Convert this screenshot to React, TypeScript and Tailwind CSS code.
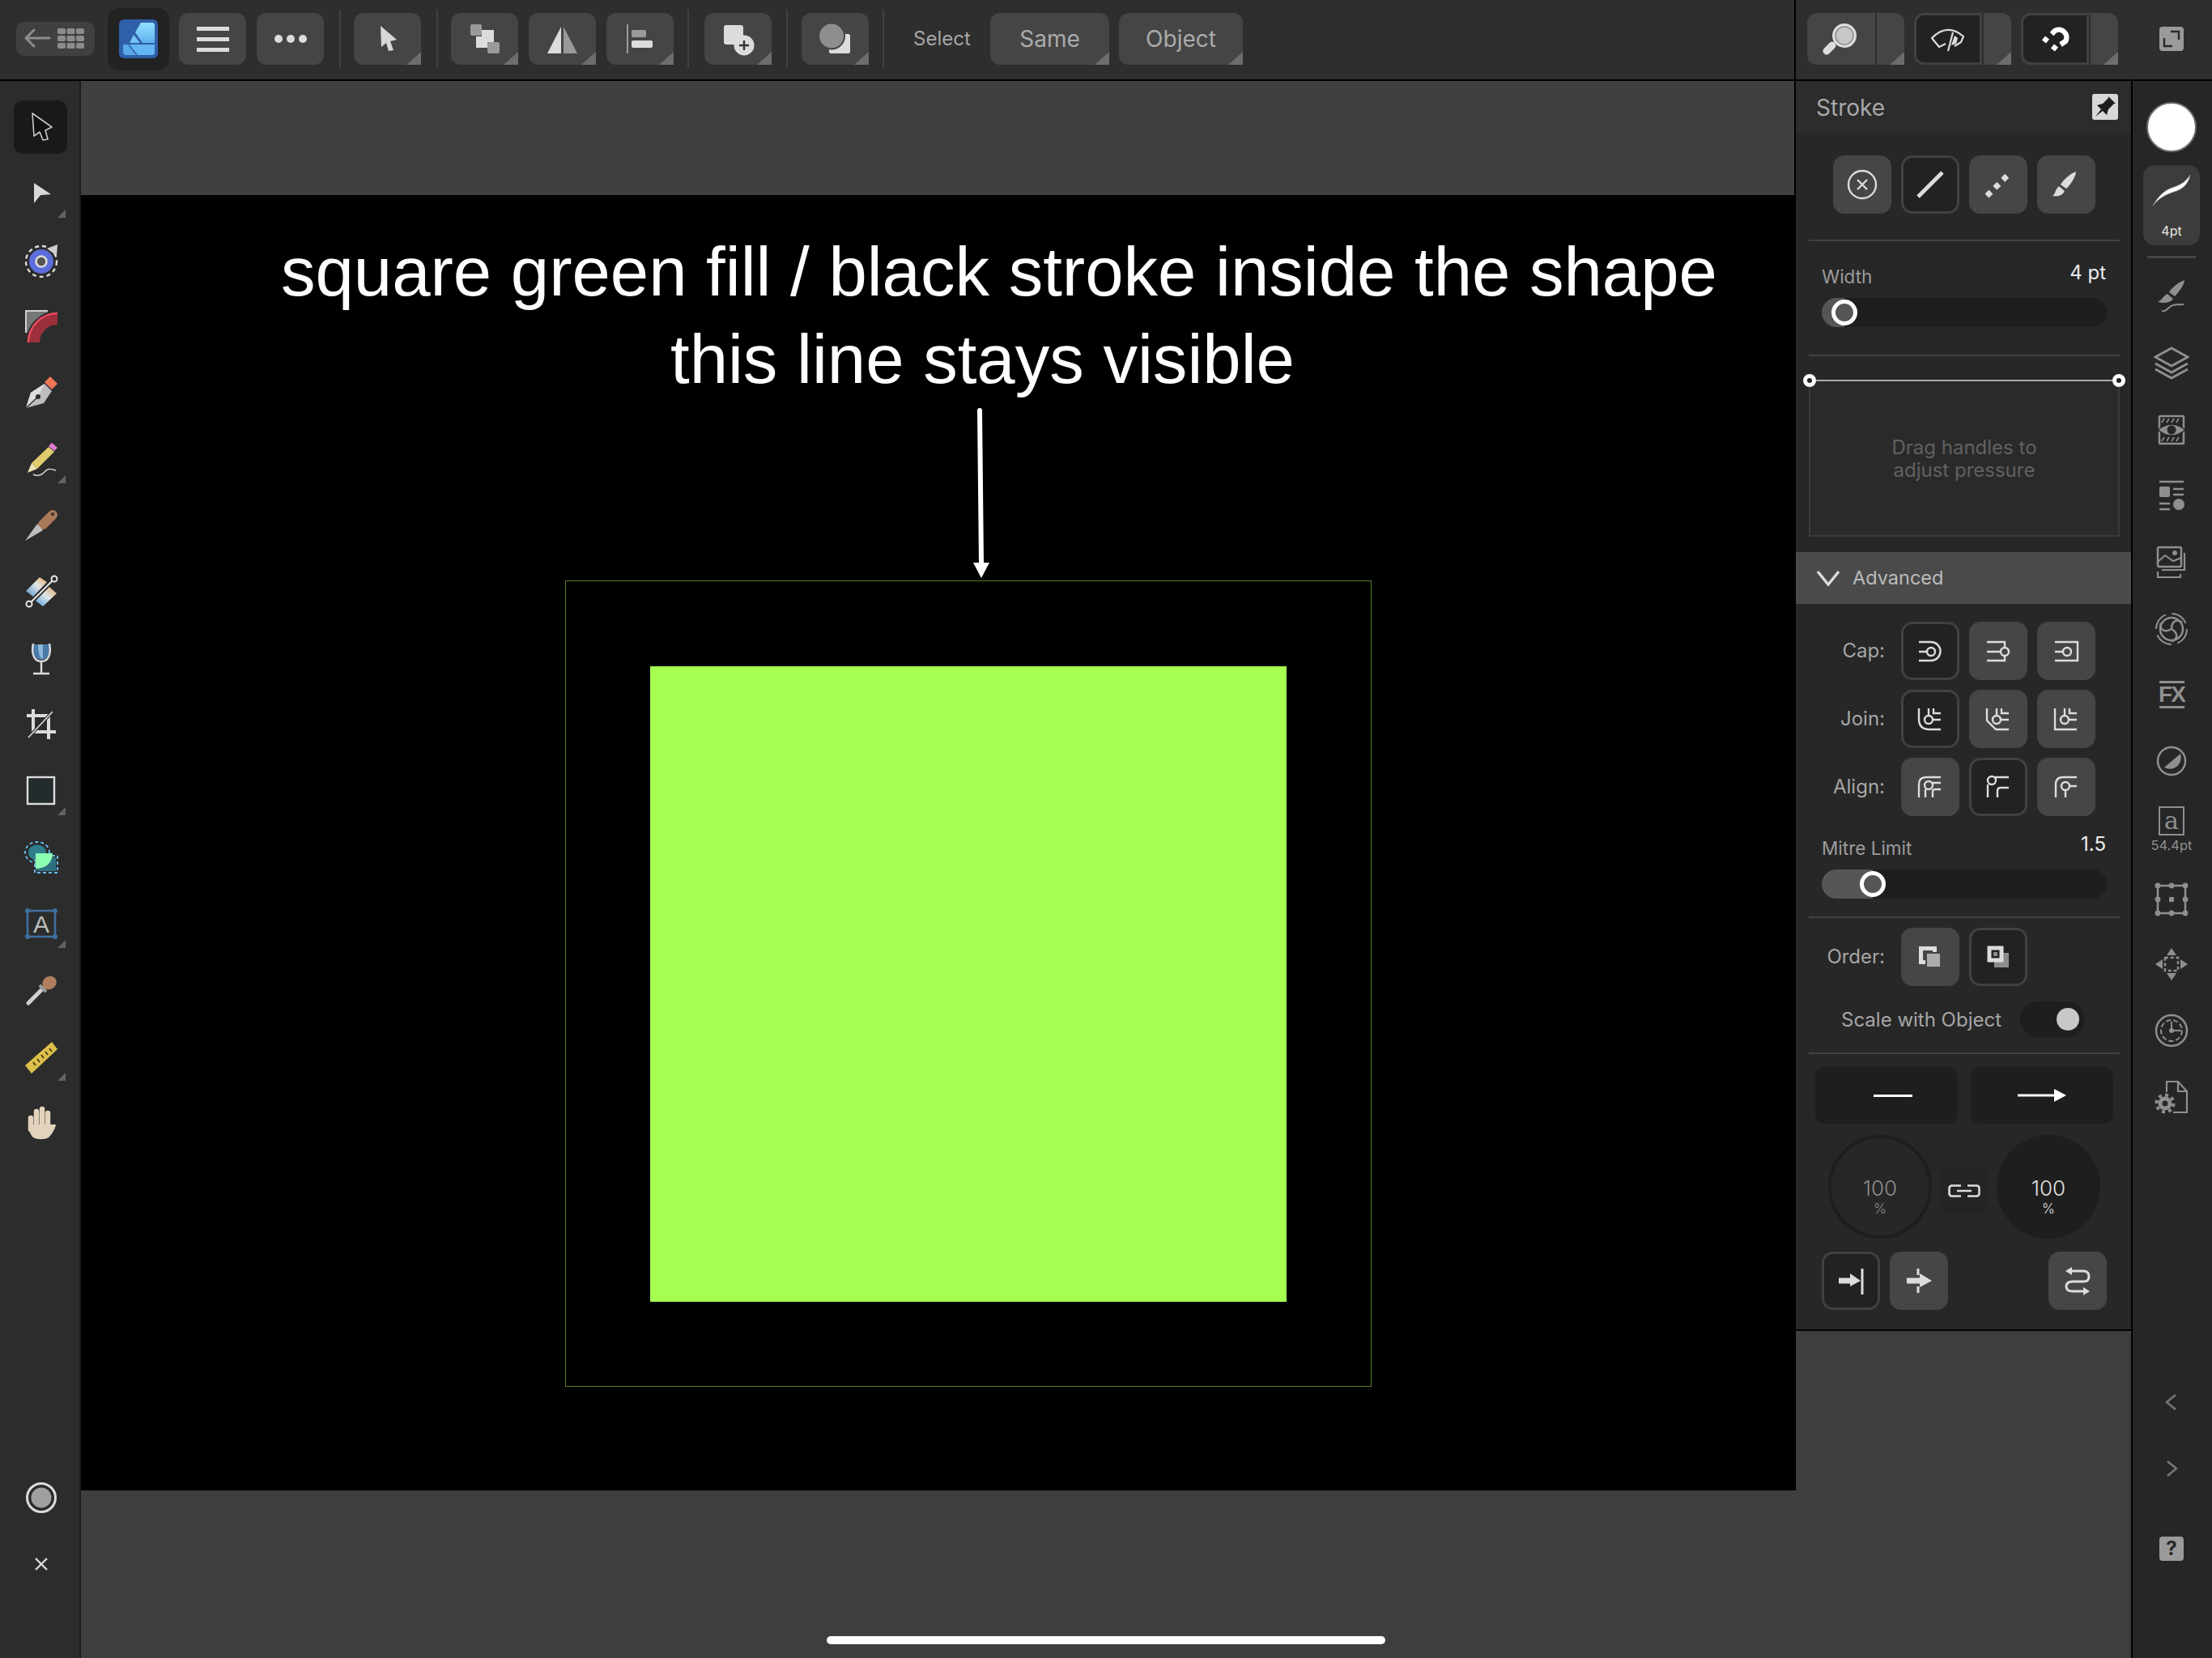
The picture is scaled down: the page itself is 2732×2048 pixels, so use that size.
import React from 'react';

const Corner = () => (
  <svg viewBox="0 0 18 16" className="absolute right-0 bottom-0 w-[18px] h-[16px]">
    <polygon points="18,0 18,16 0,16" fill="#6d6d6d" />
  </svg>
);

const TopBtn = ({ children }: { children: React.ReactNode }) => (
  <div className="relative w-[83px] h-[64px] shrink-0 rounded-[12px] rounded-br-none bg-[#454545]">
    <svg viewBox="0 0 83 64" className="w-[83px] h-[64px]">{children}</svg>
    <Corner />
  </div>
);

const Sep = ({ cls }: { cls: string }) => <div className={`w-[2px] h-[72px] shrink-0 bg-[#414141] ${cls}`} />;

const TextBtn = ({ label, cls }: { label: string; cls: string }) => (
  <div className={`relative h-[64px] shrink-0 flex items-center justify-center rounded-[12px] rounded-br-none bg-[#454545] text-[28px] text-[#ababab] ${cls}`}>
    {label}
    <Corner />
  </div>
);

const SplitBtn = ({ active, children }: { active?: boolean; children: React.ReactNode }) => (
  <div className="flex w-[120px] h-[64px] shrink-0">
    <div className={active ? 'w-[84px] rounded-l-[12px] bg-[#222222] border-[3px] border-[#414141]' : 'w-[84px] rounded-l-[12px] bg-[#454545]'}>
      {active ? (
        <svg viewBox="3 3 78 58" className="w-[78px] h-[58px]">{children}</svg>
      ) : (
        <svg viewBox="0 0 84 64" className="w-[84px] h-[64px]">{children}</svg>
      )}
    </div>
    <div className="relative ml-[2px] w-[34px] bg-[#454545] rounded-tr-[12px]">
      <Corner />
    </div>
  </div>
);

const Tool = ({ corner, active, children }: { corner?: boolean; active?: boolean; children: React.ReactNode }) => (
  <div className="relative w-[98px] h-[82px] shrink-0 flex items-center justify-center pl-[3px]">
    {active && <div className="absolute left-[17px] top-[8px] w-[66px] h-[66px] rounded-[12px] bg-[#191919]" />}
    <svg viewBox="0 0 44 44" className="relative w-[44px] h-[44px]">{children}</svg>
    {corner && (
      <svg viewBox="0 0 10 10" className="absolute left-[71px] top-[61px] w-[10px] h-[10px]">
        <polygon points="10,0 10,10 0,10" fill="#626262" />
      </svg>
    )}
  </div>
);

const Side = ({ cls, children }: { cls?: string; children: React.ReactNode }) => (
  <div className={`w-[96px] h-[82px] shrink-0 flex items-center justify-center ${cls ?? ''}`}>
    <svg viewBox="0 0 44 44" className="w-[44px] h-[44px]" fill="none" stroke="#8f8f8f" strokeWidth="2.5">{children}</svg>
  </div>
);

const IconBtn = ({ active, children }: { active?: boolean; children: React.ReactNode }) => (
  <div className={active ? 'w-[72px] h-[72px] shrink-0 rounded-[14px] bg-[#222222] border-[3px] border-[#414141] flex items-center justify-center' : 'w-[72px] h-[72px] shrink-0 rounded-[14px] bg-[#464646] flex items-center justify-center'}>
    {active ? (
      <svg viewBox="3 3 66 66" className="w-[66px] h-[66px]" fill="none" stroke="#dcdcdc" strokeWidth="2.4">{children}</svg>
    ) : (
      <svg viewBox="0 0 72 72" className="w-[72px] h-[72px]" fill="none" stroke="#dcdcdc" strokeWidth="2.4">{children}</svg>
    )}
  </div>
);

const Row = ({ label, children }: { label: string; children: React.ReactNode }) => (
  <div className="flex items-center h-[72px]">
    <div className="w-[110px] mr-[20px] text-right text-[24px] text-[#a6a6a6]">{label}</div>
    <div className="flex gap-[12px]">{children}</div>
  </div>
);

const Slider = ({ fill }: { fill: string }) => (
  <div className="ml-[32px] w-[352px] h-[36px] rounded-full bg-[#1e1e1e]">
    <div className={`relative h-[36px] rounded-l-full bg-[#565656] ${fill}`}>
      <div className="absolute right-[-16px] top-[2px] w-[32px] h-[32px] rounded-full border-[5px] border-white bg-[#565656]" />
    </div>
  </div>
);

const Divider = () => <div className="ml-[16px] mr-[14px] h-[2px] bg-[#424242]" />;

const Handle = ({ cls }: { cls: string }) => (
  <div className={`absolute top-[-9px] w-[16px] h-[16px] rounded-full border-[5px] border-white bg-[#222222] ${cls}`} />
);

export default function App() {
  return (
    <div className="relative w-[2732px] h-[2048px] overflow-hidden flex flex-col bg-[#3e3e3e] font-['Inter',sans-serif]">
      {/* top bar */}
      <div className="flex h-[100px] shrink-0 border-b-2 border-black bg-[#2e2e2e]">
        <div className="flex items-center w-[2216px] h-[96px] pl-[20px] shrink-0">
          <div className="w-[97px] h-[42px] rounded-[10px] bg-[#404040] shrink-0">
            <svg viewBox="0 0 97 42" className="w-[97px] h-[42px]">
              <path d="M12 20 H41 M22 10 L12 20 L22 30" fill="none" stroke="#8c8c8c" strokeWidth="3" strokeLinecap="round" strokeLinejoin="round" />
              {[8, 17, 26].map((y) => [51, 62.5, 74].map((x) => <rect key={`${x}-${y}`} x={x} y={y} width="10" height="7" rx="2" fill="#8c8c8c" />))}
            </svg>
          </div>
          <div className="ml-[16px] w-[76px] h-[77px] rounded-[14px] bg-[#222222] shrink-0 flex items-center justify-center">
            <svg viewBox="0 0 48 48" className="w-[48px] h-[48px]">
              <defs>
                <linearGradient id="logoA" x1="0" y1="0" x2="0" y2="1">
                  <stop offset="0" stopColor="#93deff" />
                  <stop offset="1" stopColor="#60b2ee" />
                </linearGradient>
              </defs>
              <rect width="48" height="48" rx="6" fill="#2f5fa8" />
              <polygon points="27,4 42,4 44,6 44,29 29,29 20,16" fill="url(#logoA)" />
              <polygon points="18,19 26,29 13,29" fill="#73c4f4" />
              <polygon points="13,31 44,31 44,42 42,44 23,44" fill="#62b6f1" />
              <polygon points="5,31 11,31 21,44 8,44 5,42" fill="#58a8ea" />
            </svg>
          </div>
          <div className="ml-[12px] w-[83px] h-[64px] rounded-[12px] bg-[#454545] shrink-0 flex flex-col items-center justify-center gap-[8px]">
            <div className="w-[40px] h-[5px] bg-[#dcdcdc]" />
            <div className="w-[40px] h-[5px] bg-[#dcdcdc]" />
            <div className="w-[40px] h-[5px] bg-[#dcdcdc]" />
          </div>
          <div className="ml-[13px] w-[83px] h-[64px] rounded-[12px] bg-[#454545] shrink-0 flex items-center justify-center gap-[5px]">
            <div className="w-[10px] h-[10px] rounded-full bg-[#dcdcdc]" />
            <div className="w-[10px] h-[10px] rounded-full bg-[#dcdcdc]" />
            <div className="w-[10px] h-[10px] rounded-full bg-[#dcdcdc]" />
          </div>
          <Sep cls="ml-[19px] mr-[16px]" />
          <TopBtn>
            <polygon points="33,16 53,33 45,35 49,46 43,47 40,37 34,42" fill="#d8d8d8" />
          </TopBtn>
          <Sep cls="ml-[19px] mr-[16px]" />
          <TopBtn>
            <rect x="24" y="14" width="14" height="14" rx="2" fill="#9a9a9a" />
            <polygon points="38,21 53,21 53,36 45,36 45,43 31,43 31,29 38,29" fill="#dcdcdc" />
            <rect x="45" y="36" width="15" height="14" rx="2" fill="#9a9a9a" />
          </TopBtn>
          <div className="ml-[13px]">
            <TopBtn>
              <polygon points="40,17 23,50 40,50" fill="#dcdcdc" />
              <polygon points="43,17 43,50 60,50" fill="#9a9a9a" />
            </TopBtn>
          </div>
          <div className="ml-[13px]">
            <TopBtn>
              <rect x="25" y="14" width="2" height="36" fill="#9a9a9a" />
              <rect x="31" y="21" width="18" height="9" rx="2" fill="#9a9a9a" />
              <rect x="31" y="34" width="26" height="9" rx="2" fill="#dcdcdc" />
            </TopBtn>
          </div>
          <Sep cls="ml-[17px] mr-[19px]" />
          <TopBtn>
            <rect x="24" y="15" width="24" height="24" rx="3" fill="#dcdcdc" />
            <circle cx="49" cy="40" r="12.5" fill="#dcdcdc" />
            <path d="M49 34 V46 M43 40 H55" stroke="#333333" strokeWidth="2.4" />
          </TopBtn>
          <Sep cls="ml-[18px] mr-[17px]" />
          <TopBtn>
            <rect x="34" y="26" width="26" height="24" rx="2" fill="#dcdcdc" />
            <circle cx="37" cy="28.5" r="16" fill="#8e8e8e" stroke="#454545" strokeWidth="2" />
          </TopBtn>
          <Sep cls="ml-[17px] mr-[36px]" />
          <div className="text-[24px] text-[#a6a6a6] w-[95px] shrink-0">Select</div>
          <TextBtn label="Same" cls="w-[147px]" />
          <TextBtn label="Object" cls="ml-[12px] w-[153px]" />
        </div>
        <div className="w-[2px] h-[98px] bg-black shrink-0" />
        <div className="flex items-center h-[96px] pl-[14px] gap-[12px]">
          <SplitBtn>
            <circle cx="46" cy="28" r="15" fill="#dcdcdc" />
            <circle cx="46" cy="28" r="11" fill="#c8c8c8" stroke="#8c8c8c" strokeWidth="1.5" />
            <path d="M31 40 L24 47" stroke="#dcdcdc" strokeWidth="9" strokeLinecap="round" />
          </SplitBtn>
          <SplitBtn active>
            <g fill="none" stroke="#dcdcdc" strokeWidth="2.2" strokeLinejoin="round">
              <path d="M39 38 L31 42 L22 31 Q41 12 61 29 L58 36 L50 41" />
              <path d="M42 47 L48 24" />
              <path d="M50 28 L46 40 L52 38 L54 31 Z" fill="#dcdcdc" stroke="none" />
            </g>
          </SplitBtn>
          <SplitBtn active>
            <path d="M38 26 L42 22 A 9.5 9.5 0 0 1 55 35 L49 39" fill="none" stroke="#ffffff" strokeWidth="6.5" />
            <path d="M28 31 L33 35 M39 41 L44 45" fill="none" stroke="#ffffff" strokeWidth="6.5" />
          </SplitBtn>
          <div className="ml-[39px] w-[30px] h-[30px] rounded-[4px] bg-[#9a9a9a] shrink-0">
            <svg viewBox="0 0 30 30" className="w-[30px] h-[30px]">
              <path d="M14 6 H24 V16 M6 14 V24 H16" fill="none" stroke="#2a2a2a" strokeWidth="2.4" />
            </svg>
          </div>
        </div>
      </div>

      <div className="flex flex-1 min-h-0">
        {/* tools */}
        <div className="w-[100px] shrink-0 border-r-2 border-[#1c1c1c] bg-[#2c2c2c] flex flex-col pt-[16px]">
          <Tool active>
            <polygon points="11,5 35,22 27,26 30,37 24,38 20,28 13,33" fill="#111111" stroke="#c8c8c8" strokeWidth="1.6" strokeLinejoin="round" />
          </Tool>
          <Tool corner>
            <polygon points="13,9 34,23 21,24 13,34" fill="#d8d8d8" />
          </Tool>
          <Tool>
            <circle cx="22" cy="24" r="19" fill="none" stroke="#dcdcdc" strokeWidth="2.4" strokeDasharray="5 4" />
            <circle cx="22" cy="24" r="15" fill="#5d6ddb" />
            <circle cx="22" cy="24" r="6.5" fill="#555555" stroke="#dcdcdc" strokeWidth="2.6" />
            <polygon points="29,8 42,3 41,17" fill="#cfcfcf" />
          </Tool>
          <Tool>
            <polygon points="3,3 30,3 30,18 14,30 3,30" fill="#777777" />
            <path d="M3 30 V3 H30" fill="none" stroke="#d0d0d0" strokeWidth="2" />
            <path d="M7 42 A35 35 0 0 1 42 7" fill="none" stroke="#2c2c2c" strokeWidth="8" />
            <path d="M13.5 42 A28.5 28.5 0 0 1 42 13.5" fill="none" stroke="#9b2f3b" strokeWidth="13" />
            <path d="M6 42 A36 36 0 0 1 42 6" fill="none" stroke="#ef4a5d" strokeWidth="2.5" />
          </Tool>
          <Tool>
            <polygon points="3,41 9,22 26,11 35,20 25,35" fill="#bdbdbd" />
            <polygon points="3,41 9,22 26,11 18,27" fill="#dedede" />
            <path d="M3 41 L18 27" stroke="#2c2c2c" strokeWidth="1.4" />
            <circle cx="18" cy="27" r="3" fill="#2c2c2c" />
            <polygon points="33,2 42,11 35,18 26,9" fill="#ee7656" />
          </Tool>
          <Tool corner>
            <polygon points="35,2 42,8 38,12 31,6" fill="#e27bd8" />
            <polygon points="31,7 38,13 17,34 10,27" fill="#dfcc6e" />
            <polygon points="10,27 17,34 5,39" fill="#efe2b0" />
            <path d="M12 41 C18 44 22 42 26 38 C30 33 34 34 40 36" fill="none" stroke="#dcdcdc" strokeWidth="1.4" />
          </Tool>
          <Tool>
            <path d="M24 21 L36 9" stroke="#a97859" strokeWidth="12" strokeLinecap="round" />
            <circle cx="36" cy="8" r="2" fill="#3a2a20" />
            <polygon points="17,20 24,28 2,41" fill="#bdbdbd" />
          </Tool>
          <Tool>
            <defs>
              <linearGradient id="fillA" x1="0" y1="1" x2="1" y2="0">
                <stop offset="0" stopColor="#4f8fc8" />
                <stop offset="0.55" stopColor="#dfe6e4" />
                <stop offset="1" stopColor="#eaa868" />
              </linearGradient>
              <linearGradient id="fillB" x1="0" y1="1" x2="1" y2="0">
                <stop offset="0" stopColor="#4f9ad8" />
                <stop offset="0.5" stopColor="#d8e6ea" />
                <stop offset="1" stopColor="#eaa868" />
              </linearGradient>
            </defs>
            <polygon points="3,21 20,4 29,10 12,28" fill="url(#fillA)" />
            <polygon points="15,33 32,16 41,24 24,40" fill="url(#fillB)" />
            <path d="M8 36 L36 8" stroke="#2c2c2c" strokeWidth="4" />
            <path d="M8 36 L36 8" stroke="#e6e6e6" strokeWidth="2" />
            <circle cx="7" cy="37" r="3.5" fill="#2c2c2c" stroke="#e6e6e6" strokeWidth="2" />
            <circle cx="38" cy="6" r="3.5" fill="#2c2c2c" stroke="#e6e6e6" strokeWidth="2" />
          </Tool>
          <Tool>
            <path d="M12 5 H32 C34 14 31 24 22 24 C13 24 10 14 12 5Z" fill="#4b7aa8" />
            <path d="M18 5 H24 V23 C20 22 18 16 18 5Z" fill="#8db6d8" />
            <path d="M12 4 C9 18 14 26 22 26 C30 26 35 18 32 4 M22 26 V40 M12 41 H32" fill="none" stroke="#dcdcdc" strokeWidth="2.4" />
          </Tool>
          <Tool>
            <path d="M4 11 H31 V40 M12 3 V31 H40" fill="none" stroke="#dcdcdc" strokeWidth="4" />
            <path d="M6 38 L36 6" stroke="#2c2c2c" strokeWidth="4" />
            <path d="M6 38 L36 6" stroke="#dcdcdc" strokeWidth="1.6" />
          </Tool>
          <Tool corner>
            <rect x="5" y="5" width="33" height="33" fill="#232b2d" stroke="#dcdcdc" strokeWidth="2.4" />
          </Tool>
          <Tool>
            <rect x="16" y="22" width="24" height="17" fill="#2f7080" />
            <rect x="14" y="20" width="28" height="21" fill="none" stroke="#69b7e8" strokeWidth="2" strokeDasharray="4 3" />
            <ellipse cx="17" cy="16" rx="11" ry="9.5" fill="#2f7f8f" />
            <ellipse cx="17" cy="16" rx="15" ry="13" fill="none" stroke="#69b7e8" strokeWidth="2" strokeDasharray="4 3" />
            <path d="M15 17 H36 C36 28 28 36 15 36 Z" fill="#8dffb0" />
          </Tool>
          <Tool corner>
            <rect x="5" y="6" width="34" height="32" fill="none" stroke="#3f6f9f" strokeWidth="2.6" />
            {[[5, 6], [39, 6], [5, 38], [39, 38]].map(([x, y]) => (
              <circle key={`${x}-${y}`} cx={x} cy={y} r="3" fill="#3f6f9f" />
            ))}
            <text x="22" y="33" textAnchor="middle" fontSize="30" fill="#bdbdbd" fontFamily="Liberation Sans, sans-serif">A</text>
          </Tool>
          <Tool>
            <path d="M6 38 L24 20" stroke="#cfcfcf" strokeWidth="5" strokeLinecap="round" />
            <path d="M20 16 L28 24" stroke="#9a9a9a" strokeWidth="4" />
            <ellipse cx="32" cy="13" rx="9" ry="8" transform="rotate(-35 32 13)" fill="#b17f5e" />
          </Tool>
          <Tool corner>
            <polygon points="2,33 35,4 42,13 10,43" fill="#dcc04a" />
            <path d="M12 29 L15 33 M17 25 L20 29 M22 20 L25 24 M27 16 L30 20 M32 12 L35 16" stroke="#4a4018" strokeWidth="2" />
          </Tool>
          <Tool>
            <path d="M9 16 V30 M16 8 V30 M23 5 V30 M30 10 V30" stroke="#e3d3bd" strokeWidth="6.5" strokeLinecap="round" />
            <path d="M6 24 H33 L40 24 C39 30 35 36 31 40 C26 43 17 43 12 40 C8 36 6 30 6 24Z" fill="#e3d3bd" />
          </Tool>
          <div className="mt-auto" />
          <Tool>
            <circle cx="22" cy="22" r="17.5" fill="none" stroke="#dcdcdc" strokeWidth="3" />
            <circle cx="22" cy="22" r="12.5" fill="#a0a0a0" />
          </Tool>
          <div className="mb-[75px]">
            <Tool>
              <path d="M15 15 L29 29 M29 15 L15 29" stroke="#dcdcdc" strokeWidth="2.4" />
            </Tool>
          </div>
        </div>

        {/* canvas */}
        <div className="w-[2118px] shrink-0 flex flex-col">
          <div className="h-[141px] shrink-0 bg-[#404040] border-r-2 border-black" />
          <div className="h-[1600px] shrink-0 bg-black pt-[41px] font-['Liberation_Sans',sans-serif] text-white">
            <div className="ml-[247px] text-[85.1px] leading-[108px] whitespace-nowrap">square green fill / black stroke inside the shape</div>
            <div className="ml-[728px] text-[85.1px] leading-[108px] whitespace-nowrap">this line stays visible</div>
            <div className="ml-[1102px] mt-[6px] h-[210px]">
              <svg viewBox="0 0 20 210" className="w-[20px] h-[210px]">
                <path d="M8 3 L10 192" stroke="#ffffff" strokeWidth="6" strokeLinecap="round" />
                <polygon points="0,191 20,191 10,210" fill="#ffffff" />
              </svg>
            </div>
            <div className="ml-[598px] mt-[3px] w-[996px] h-[996px] border border-[#557f28] flex items-center justify-center">
              <div className="w-[786px] h-[785px] bg-[#a5ff50]" />
            </div>
          </div>
          <div className="flex-1 bg-[#3e3e3e]" />
        </div>

        {/* stroke panel */}
        <div className="w-[414px] shrink-0 flex flex-col">
          <div className="shrink-0 bg-[#272727] border-b-2 border-black pb-[24px]">
            <div className="h-[64px] flex items-center justify-between pl-[25px] pr-[16px] bg-[#2c2c2c] text-[28px] text-[#a8a8a8]">
              <span className="mt-[2px]">Stroke</span>
              <div className="w-[32px] h-[32px] rounded-[3px] bg-[#d8d8d8]">
                <svg viewBox="0 0 32 32" className="w-[32px] h-[32px]">
                  <polygon points="4,28 13,21 18,26 20,19 27,12 29,12 20,3 20,5 13,12 6,14 11,19" fill="#1c1c1c" />
                </svg>
              </div>
            </div>
            <div className="pl-[46px] pt-[28px] flex gap-[12px]">
              <IconBtn>
                <circle cx="36" cy="36" r="17" />
                <path d="M30 30 L42 42 M42 30 L30 42" />
              </IconBtn>
              <IconBtn active>
                <path d="M21 51 L51 21" strokeWidth="5" />
              </IconBtn>
              <IconBtn>
                <path d="M22 50 L50 22" strokeWidth="7" strokeDasharray="7 7" />
              </IconBtn>
              <IconBtn>
                <path d="M48 20 C48 26 40 38 36 41 L29 36 C33 29 42 22 48 20Z" fill="#dcdcdc" stroke="none" />
                <path d="M27 38 L34 44 C31 50 25 51 19 50 C23 47 22 42 27 38Z" fill="#dcdcdc" stroke="none" />
              </IconBtn>
            </div>
            <div className="mt-[32px]"><Divider /></div>
            <div className="mt-[24px] h-[46px] pl-[32px] pr-[31px] flex justify-between items-start">
              <div className="mt-[5px] text-[22.5px] leading-[30px] text-[#9c9c9c]">Width</div>
              <div className="text-[24px] leading-[30px] text-[#ececec]">4 pt</div>
            </div>
            <Slider fill="w-[28px]" />
            <div className="mt-[34px]"><Divider /></div>
            <div className="relative ml-[16px] mr-[14px] mt-[29px] h-[194px] pt-[2px] border-t-2 border-t-[#a8a8a8] border-x-2 border-b-2 border-x-[#3a3a3a] border-b-[#3a3a3a] bg-[#2a2a2a] flex items-center justify-center text-center text-[24px] leading-[28px] text-[#616161]">
              <Handle cls="left-[-9px]" />
              <Handle cls="right-[-9px]" />
              <div>Drag handles to<br />adjust pressure</div>
            </div>
            <div className="mt-[19px] h-[64px] bg-[#4a4a4a] flex items-center pl-[25px] text-[23.5px] text-[#bcbcbc]">
              <svg viewBox="0 0 30 20" className="w-[30px] h-[20px] mr-[15px]">
                <path d="M2 2 L15 18 L28 2" fill="none" stroke="#dcdcdc" strokeWidth="3.4" />
              </svg>
              Advanced
            </div>
            <div className="mt-[22px] flex flex-col gap-[12px]">
              <Row label="Cap:">
                <IconBtn active>
                  <path d="M22 25 H37 A11.5 11.5 0 0 1 37 48 H22 M22 37 H32" />
                  <circle cx="37" cy="37" r="5" />
                </IconBtn>
                <IconBtn>
                  <path d="M22 25 H44 V32 M44 42 V48 H22 M22 37 H39" />
                  <circle cx="44" cy="37" r="5" />
                </IconBtn>
                <IconBtn>
                  <path d="M22 25 H50 V48 H22 M22 37 H32" />
                  <circle cx="37" cy="37" r="5" />
                </IconBtn>
              </Row>
              <Row label="Join:">
                <IconBtn active>
                  <path d="M22 23 V36 Q22 49 35 49 H49 M40 23 V29 H49 M34 23 V32 M39 37 H49" />
                  <circle cx="34" cy="37" r="5" />
                </IconBtn>
                <IconBtn>
                  <path d="M22 23 V38 L33 49 H49 M40 23 V29 H49 M34 23 V32 M39 37 H49" />
                  <circle cx="34" cy="37" r="5" />
                </IconBtn>
                <IconBtn>
                  <path d="M22 23 V49 H49 M40 23 V29 H49 M34 23 V32 M39 37 H49" />
                  <circle cx="34" cy="37" r="5" />
                </IconBtn>
              </Row>
              <Row label="Align:">
                <IconBtn>
                  <path d="M22 49 V33 Q22 24 31 24 H49 M39 31 H49 M30 49 V39 M39 49 V42 Q39 39 42 39 H49" />
                  <circle cx="34" cy="34" r="5" />
                </IconBtn>
                <IconBtn active>
                  <path d="M32 24 H49 M23 33 V49 M35 49 V41 Q35 37 39 37 H49" />
                  <circle cx="28" cy="28" r="5" />
                </IconBtn>
                <IconBtn>
                  <path d="M23 49 V33 Q23 24 32 24 H49 M35 40 V49 M40 35 H49" />
                  <circle cx="35" cy="35" r="5" />
                </IconBtn>
              </Row>
            </div>
            <div className="mt-[20px] h-[46px] pl-[32px] pr-[31px] flex justify-between items-start">
              <div className="mt-[5px] text-[22.5px] leading-[30px] text-[#9c9c9c]">Mitre Limit</div>
              <div className="text-[24px] leading-[30px] text-[#ececec]">1.5</div>
            </div>
            <Slider fill="w-[63px]" />
            <div className="mt-[22px]"><Divider /></div>
            <div className="mt-[12px]">
              <Row label="Order:">
                <IconBtn>
                  <rect x="24.5" y="25.5" width="17" height="17" fill="none" stroke="#dcdcdc" strokeWidth="5" />
                  <rect x="31" y="31" width="18" height="18" fill="#acacac" stroke="#464646" strokeWidth="2" />
                </IconBtn>
                <IconBtn active>
                  <rect x="31" y="31" width="18" height="18" fill="#8c8c8c" stroke="none" />
                  <rect x="25" y="25" width="15" height="15" fill="#222222" stroke="#dcdcdc" strokeWidth="5" />
                  <rect x="30" y="30" width="5" height="5" fill="#8c8c8c" stroke="none" />
                </IconBtn>
              </Row>
            </div>
            <div className="mt-[19px] px-[57px] h-[44px] flex items-center justify-between text-[24px] text-[#a6a6a6]">
              <span className="mt-[2px] -ml-[1px]">Scale with Object</span>
              <div className="w-[80px] h-[44px] rounded-full bg-[#1e1e1e] flex items-center justify-end pr-[7px]">
                <div className="w-[28px] h-[28px] rounded-full bg-[#c8c8c8]" />
              </div>
            </div>
            <div className="mt-[19px]"><Divider /></div>
            <div className="mt-[16px] pl-[24px] flex gap-[16px]">
              <div className="w-[176px] h-[70px] rounded-[12px] bg-[#1e1e1e] flex items-center justify-center">
                <div className="ml-[16px] w-[48px] h-[3px] bg-white" />
              </div>
              <div className="w-[176px] h-[70px] rounded-[12px] bg-[#1e1e1e] flex items-center justify-center">
                <svg viewBox="0 0 60 16" className="w-[60px] h-[16px]">
                  <path d="M0 8 H46" stroke="#ffffff" strokeWidth="3" />
                  <polygon points="45,0 60,8 45,16" fill="#ffffff" />
                </svg>
              </div>
            </div>
            <div className="mt-[14px] pl-[40px] flex items-center">
              <div className="w-[128px] h-[128px] pt-[24px] rounded-full border-4 border-[#1e1e1e] flex flex-col items-center justify-center font-light text-[#8c8c8c]">
                <div className="text-[26px] leading-[30px]">100</div>
                <div className="text-[17px] leading-[20px]">%</div>
              </div>
              <div className="ml-[11px] mt-[10px] w-[58px] h-[58px] rounded-[10px] bg-[#242424] flex items-center justify-center">
                <svg viewBox="0 0 40 16" className="w-[40px] h-[16px]">
                  <path d="M16 1.5 H5 Q1.5 1.5 1.5 5 V11 Q1.5 14.5 5 14.5 H16 M24 1.5 H35 Q38.5 1.5 38.5 5 V11 Q38.5 14.5 35 14.5 H24 M11 8 H29" fill="none" stroke="#dcdcdc" strokeWidth="2.6" />
                </svg>
              </div>
              <div className="ml-[11px] w-[128px] h-[128px] pt-[24px] rounded-full bg-[#1e1e1e] flex flex-col items-center justify-center font-light text-[#e0e0e0]">
                <div className="text-[26px] leading-[30px]">100</div>
                <div className="text-[17px] leading-[20px]">%</div>
              </div>
            </div>
            <div className="mt-[16px] pl-[32px] flex">
              <IconBtn active>
                <path d="M21 36 H35" strokeWidth="7" />
                <polygon points="35,27 48,36 35,43" fill="#dcdcdc" stroke="none" />
                <path d="M50 21 V53" strokeWidth="3" />
              </IconBtn>
              <div className="ml-[12px]">
                <IconBtn>
                  <path d="M35 21 V29 M35 43 V51" strokeWidth="3" />
                  <path d="M21 36 H38" strokeWidth="7" />
                  <polygon points="37,27 52,36 37,44" fill="#dcdcdc" stroke="none" />
                </IconBtn>
              </div>
              <div className="ml-[124px]">
                <IconBtn>
                  <path d="M28 24 H43 Q50 24 50 31 Q50 37 43 37 H30 Q22 37 22 43 Q22 49 30 49 H44" strokeWidth="3" />
                  <polygon points="21,24 29,19 29,29" fill="#dcdcdc" stroke="none" />
                  <polygon points="51,49 43,44 43,54" fill="#dcdcdc" stroke="none" />
                </IconBtn>
              </div>
            </div>
          </div>
          <div className="flex-1 bg-[#3e3e3e]" />
        </div>

        {/* right strip */}
        <div className="w-[100px] shrink-0 border-l-2 border-black bg-[#262626] flex flex-col items-center pr-[2px]">
          <div className="mt-[26px] w-[62px] h-[62px] rounded-full bg-white border-2 border-[#6a6a6a] shrink-0" />
          <div className="mt-[16px] w-[70px] h-[99px] rounded-[14px] bg-[#3c3c3c] shrink-0 flex flex-col items-center">
            <svg viewBox="0 0 70 62" className="w-[70px] h-[62px]">
              <path d="M12 50 C20 36 28 30 38 27 C47 24 53 20 58 12 C56 24 48 30 38 33 C29 36 20 40 12 50Z" fill="#ffffff" stroke="#8a8a8a" strokeWidth="0.8" />
            </svg>
            <div className="mt-[9px] text-[16px] leading-[20px] text-[#e6e6e6]">4pt</div>
          </div>
          <div className="mt-[13px] w-[60px] h-[3px] bg-[#474747] shrink-0" />
          <div className="mt-[4px]" />
          <Side>
            <path d="M38 4 C38 10 30 20 26 24 L19 19 C23 12 32 6 38 4Z" fill="#8f8f8f" stroke="none" />
            <path d="M17 21 L24 27 C21 32 13 33 5 31 C10 29 11 24 17 21Z" fill="#8f8f8f" stroke="none" />
            <path d="M10 42 C16 44 18 36 24 35 C28 34 32 34 37 34" strokeWidth="2" />
          </Side>
          <Side cls="pt-[3px]">
            <path d="M2 15 L22 4 L42 15 L22 26 Z" strokeWidth="3" />
            <path d="M2 23 L22 34 L42 23 M2 30 L22 41 L42 30" strokeWidth="3" />
          </Side>
          <Side cls="pt-[6px]">
            <rect x="7" y="5" width="30" height="34" rx="1" />
            <path d="M10 13 L13 8 M16 13 L19 8 M22 13 L25 8 M28 13 L31 8 M10 36 L13 31 M16 36 L19 31 M22 36 L25 31 M28 36 L31 31" strokeWidth="1.6" />
            <path d="M5 22 Q22 8 39 22 Q22 36 5 22Z" fill="#8f8f8f" stroke="#262626" strokeWidth="1.5" />
            <circle cx="22" cy="22" r="5.5" fill="#262626" stroke="none" />
          </Side>
          <Side cls="pt-[4px]">
            <path d="M7 5 H37 M24 14 H37 M24 21 H37 M7 32 H20 M7 39 H20" />
            <rect x="7" y="11" width="13" height="13" rx="2" fill="#8f8f8f" stroke="none" />
            <circle cx="31" cy="33" r="7" fill="#8f8f8f" stroke="none" />
          </Side>
          <Side cls="pt-[6px]">
            <rect x="5" y="3" width="29" height="24" rx="2" />
            <path d="M5 21 L14 13 L24 20 L34 16" strokeWidth="2" />
            <circle cx="26" cy="10" r="3" fill="#8f8f8f" stroke="none" />
            <path d="M38 10 V31 H10 M5 33 V40 H33 V36" strokeWidth="2.2" />
          </Side>
          <Side cls="pt-[6px]">
            <circle cx="22" cy="22" r="14" />
            <circle cx="22" cy="22" r="19" strokeWidth="2" strokeDasharray="22 7.8" />
            <path d="M22 22 C22 14 27 8 35 14" />
            <path d="M22 22 C22 14 27 8 35 14" transform="rotate(120 22 22)" />
            <path d="M22 22 C22 14 27 8 35 14" transform="rotate(240 22 22)" />
          </Side>
          <div className="w-[96px] h-[82px] pt-[3px] shrink-0 flex flex-col items-center justify-center">
            <div className="w-[31px] h-[3px] bg-[#8f8f8f]" />
            <div className="my-[1px] h-[26px] font-['Liberation_Sans',sans-serif] text-[28px] leading-[26px] font-bold tracking-[-2px] text-[#8f8f8f]">FX</div>
            <div className="w-[31px] h-[3px] bg-[#8f8f8f]" />
          </div>
          <Side cls="pt-[3px]">
            <circle cx="22" cy="22" r="17" />
            <path d="M13 30 L33 13 A14 14 0 0 1 13 30Z" fill="#8f8f8f" stroke="none" />
          </Side>
          <div className="w-[96px] h-[89px] shrink-0 flex flex-col items-center pt-[17px]">
            <div className="w-[32px] h-[36px] border-[2.5px] border-[#8f8f8f] flex items-center justify-center font-['DejaVu_Serif',serif] text-[30px] leading-[30px] text-[#8f8f8f]">a</div>
            <div className="mt-[2px] text-[16.5px] leading-[20px] text-[#8f8f8f]">54.4pt</div>
          </div>
          <Side cls="pt-[3px]">
            <rect x="5" y="5" width="34" height="34" />
            {[5, 22, 39].map((y) => [5, 22, 39].map((x) => (x === 22 && y === 22 ? null : <circle key={`${x}-${y}`} cx={x} cy={y} r="3.4" fill="#8f8f8f" stroke="none" />)))}
            <rect x="19" y="19" width="6" height="6" rx="1" fill="#8f8f8f" stroke="none" />
          </Side>
          <Side>
            <polygon points="22,2 16,11 28,11" fill="#8f8f8f" stroke="none" />
            <polygon points="22,42 16,33 28,33" fill="#8f8f8f" stroke="none" />
            <polygon points="2,22 11,16 11,28" fill="#8f8f8f" stroke="none" />
            <polygon points="42,22 33,16 33,28" fill="#8f8f8f" stroke="none" />
            <rect x="14" y="14" width="16" height="16" strokeDasharray="4 2.7" />
          </Side>
          <Side>
            <circle cx="22" cy="22" r="19" />
            <circle cx="22" cy="22" r="13" strokeWidth="2" strokeDasharray="6 3" />
            <path d="M22 11 V22 H34" strokeWidth="2" />
            <circle cx="22" cy="22" r="3" fill="#8f8f8f" stroke="none" />
          </Side>
          <Side>
            <path d="M16 16 V3 H30 L41 15 V41 H24 M30 3 V15 H41" strokeWidth="2.2" />
            <circle cx="14" cy="30" r="6" strokeWidth="5" />
            <circle cx="14" cy="30" r="10.5" strokeWidth="4" strokeDasharray="4 4.2" />
          </Side>
          <div className="mt-auto" />
          <Side>
            <path d="M27 13 L16 22 L27 31" stroke="#777777" />
          </Side>
          <Side>
            <path d="M17 13 L28 22 L17 31" stroke="#777777" />
          </Side>
          <div className="mt-[17px] mb-[94px] w-[96px] h-[82px] shrink-0 flex items-center justify-center">
            <div className="w-[30px] h-[30px] rounded-[4px] bg-[#9a9a9a] flex items-center justify-center text-[24px] leading-[30px] font-bold text-[#262626]">?</div>
          </div>
        </div>
      </div>

      <div className="absolute left-[1021px] top-[2021px] w-[690px] h-[10px] rounded-full bg-white" />
    </div>
  );
}
